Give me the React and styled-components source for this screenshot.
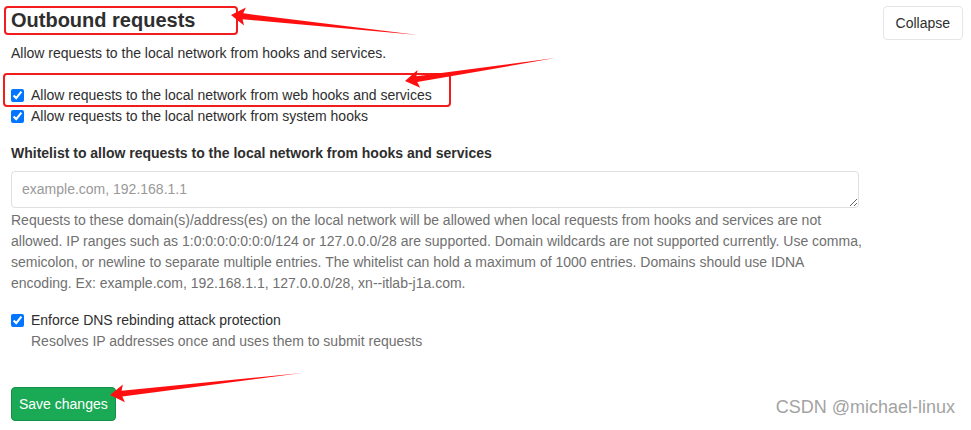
import React from 'react';
import styled, { createGlobalStyle } from 'styled-components';

const GlobalStyle = createGlobalStyle`
  body {
    margin: 0;
    background: #fff;
    font-family: "Liberation Sans", Arial, sans-serif;
    color: #2e2e2e;
  }
`;

const Page = styled.div`
  position: relative;
  width: 971px;
  height: 430px;
  box-sizing: border-box;
  padding: 6px 8px 0 11px;
  overflow: hidden;
`;

const Header = styled.div`
  display: flex;
  justify-content: space-between;
  align-items: flex-start;
`;

const Title = styled.h4`
  margin: 0;
  font-size: 20px;
  line-height: 28px;
  font-weight: bold;
  color: #2e2e2e;
`;

const Button = styled.button`
  font-family: inherit;
  font-size: 14px;
  line-height: 20px;
  border-radius: 4px;
  cursor: pointer;
  padding: ${props => props.primary ? '6px 7px' : '6px 12px'};
  color: ${props => props.primary ? '#fff' : '#2e2e2e'};
  background: ${props => props.primary ? '#1aaa55' : '#fff'};
  border: 1px solid ${props => props.primary ? '#168f48' : '#e5e5e5'};
`;

const Description = styled.p`
  margin: 3px 0 0;
  font-size: 14px;
  line-height: 20px;
`;

const CheckList = styled.div`
  margin-top: ${props => props.top}px;
  display: flex;
  flex-direction: column;
`;

const CheckRow = styled.label`
  display: flex;
  align-items: center;
  gap: 7px;
  font-size: 14px;
  line-height: 21px;
`;

const Check = styled.input`
  margin: 0;
  width: 13px;
  height: 13px;
  accent-color: #0075ff;
`;

const SubText = styled.div`
  padding-left: 20px;
  font-size: 14px;
  line-height: 21px;
  color: #707070;
`;

const FieldLabel = styled.label`
  display: block;
  margin-top: 16px;
  font-size: 14px;
  line-height: 20px;
  font-weight: bold;
`;

const TextArea = styled.textarea`
  display: block;
  box-sizing: border-box;
  margin-top: 8px;
  width: 848px;
  height: 37px;
  padding: 7px 10px;
  border: 1px solid #dfdfdf;
  border-radius: 4px;
  font-family: inherit;
  font-size: 14px;
  line-height: 20px;
  color: #2e2e2e;
  resize: vertical;
  &::placeholder {
    color: #999;
  }
`;

const Help = styled.div`
  margin-top: 2px;
  font-size: 14px;
  line-height: 21px;
  color: #707070;
  span {
    display: block;
    white-space: nowrap;
  }
`;

const Actions = styled.div`
  margin-top: 35px;
`;

const Watermark = styled.div`
  position: absolute;
  right: 16px;
  bottom: 14px;
  font-size: 18px;
  line-height: 18px;
  color: #a3a3a3;
`;

const Annotations = styled.svg`
  position: absolute;
  left: 0;
  top: 0;
  pointer-events: none;
`;

const helpLines = [
  'Requests to these domain(s)/address(es) on the local network will be allowed when local requests from hooks and services are not',
  'allowed. IP ranges such as 1:0:0:0:0:0:0:0/124 or 127.0.0.0/28 are supported. Domain wildcards are not supported currently. Use comma,',
  'semicolon, or newline to separate multiple entries. The whitelist can hold a maximum of 1000 entries. Domains should use IDNA',
  'encoding. Ex: example.com, 192.168.1.1, 127.0.0.0/28, xn--itlab-j1a.com.'
];

// red markup arrow: a wedge from a thin tail to a barbed head
function arrowPoints(tip, tail, len = 14, half = 9, neck = 3) {
  const dx = tail[0] - tip[0];
  const dy = tail[1] - tip[1];
  const d = Math.hypot(dx, dy);
  const ux = dx / d, uy = dy / d;
  const nx = -uy, ny = ux;
  const at = (a, b) => [tip[0] + ux * a + nx * b, tip[1] + uy * a + ny * b];
  const pts = [tip, at(len, half), at(len - 2, neck), tail, at(len - 2, -neck), at(len, -half)];
  return pts.map(p => p.map(v => v.toFixed(1)).join(',')).join(' ');
}

const arrows = [
  { tip: [231, 15], tail: [418, 35] },
  { tip: [405, 81], tail: [555, 58] },
  { tip: [110, 395], tail: [302, 373] }
];

function App() {
  return (
    <Page>
      <GlobalStyle />
      <Header>
        <Title>Outbound requests</Title>
        <Button type="button">Collapse</Button>
      </Header>
      <Description>Allow requests to the local network from hooks and services.</Description>

      <CheckList top={22}>
        <CheckRow>
          <Check type="checkbox" defaultChecked />
          Allow requests to the local network from web hooks and services
        </CheckRow>
        <CheckRow>
          <Check type="checkbox" defaultChecked />
          Allow requests to the local network from system hooks
        </CheckRow>
      </CheckList>

      <FieldLabel>Whitelist to allow requests to the local network from hooks and services</FieldLabel>
      <TextArea placeholder="example.com, 192.168.1.1" />
      <Help>
        {helpLines.map((line, i) => <span key={i}>{line}</span>)}
      </Help>

      <CheckList top={16}>
        <CheckRow>
          <Check type="checkbox" defaultChecked />
          Enforce DNS rebinding attack protection
        </CheckRow>
        <SubText>Resolves IP addresses once and uses them to submit requests</SubText>
      </CheckList>

      <Actions>
        <Button primary type="submit">Save changes</Button>
      </Actions>

      <Watermark>CSDN @michael-linux</Watermark>

      <Annotations width="971" height="430" viewBox="0 0 971 430">
        <rect x="5" y="7" width="232" height="27" rx="3" fill="none" stroke="#f21c1c" strokeWidth="2" />
        <rect x="4" y="74" width="446" height="32" rx="3" fill="none" stroke="#f21c1c" strokeWidth="2" />
        {arrows.map((a, i) => (
          <polygon key={i} points={arrowPoints(a.tip, a.tail)} fill="#ff1010" />
        ))}
      </Annotations>
    </Page>
  );
}

export default App;
